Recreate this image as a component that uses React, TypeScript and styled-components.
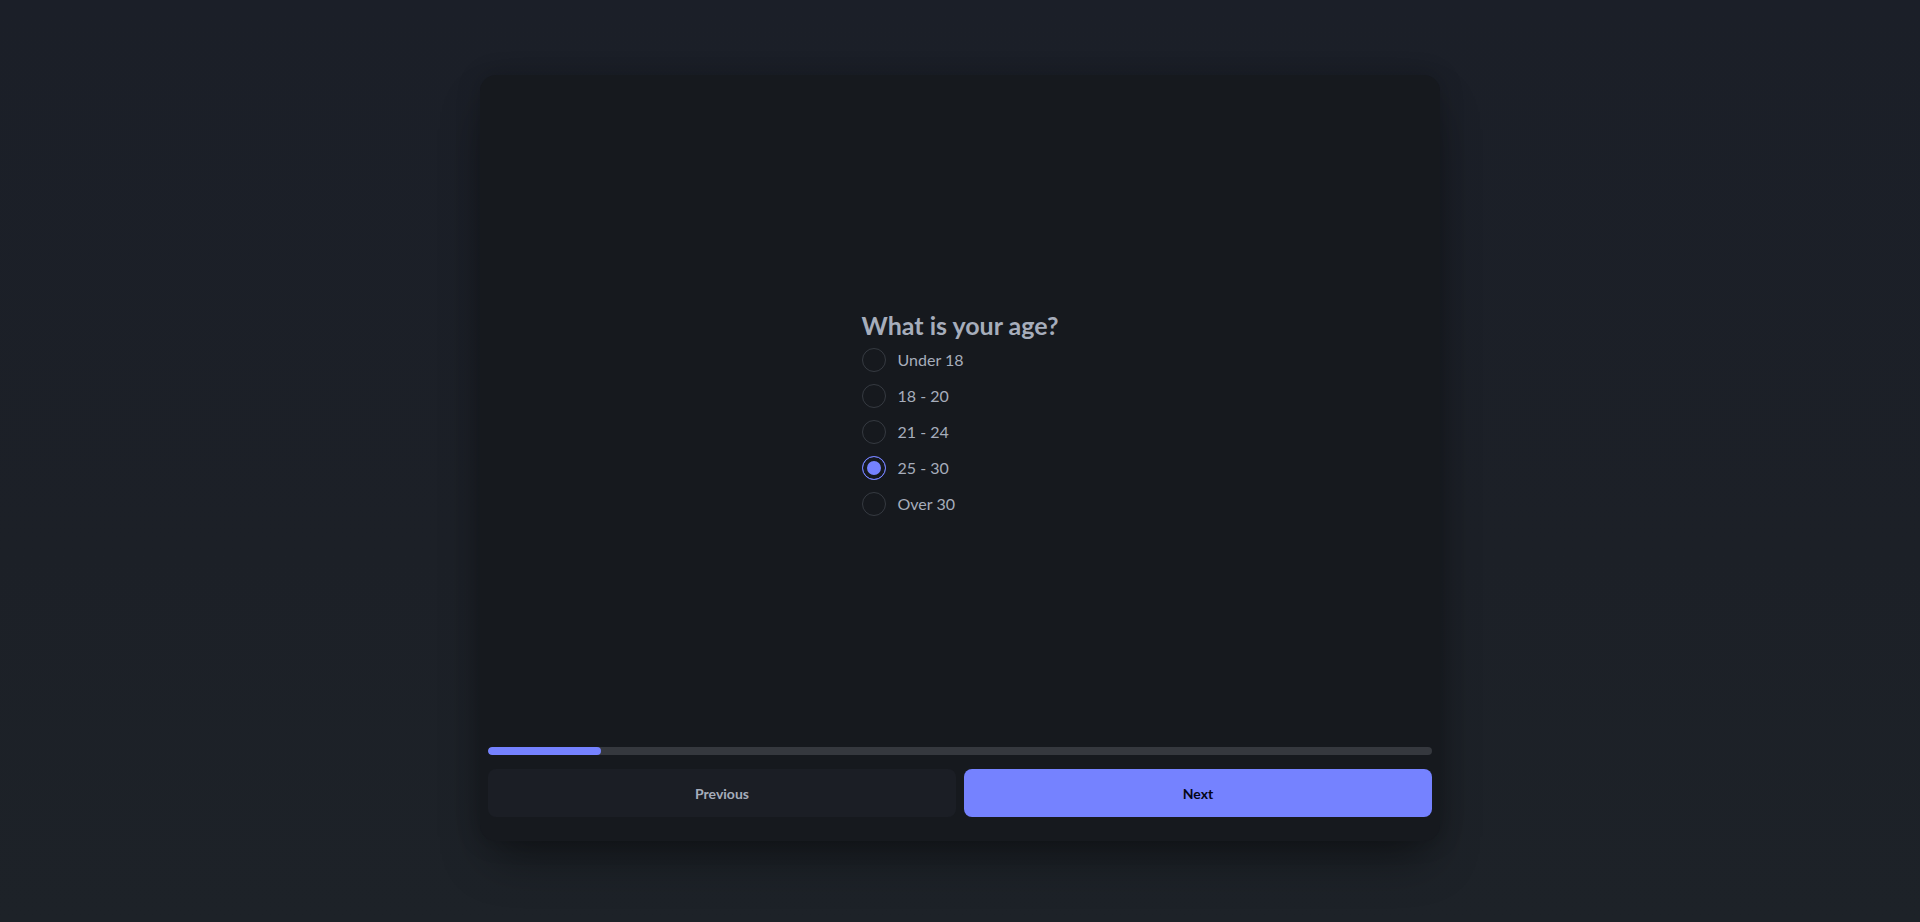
import styled, { createGlobalStyle } from "styled-components";
import { useState } from "react";

const GlobalStyle = createGlobalStyle`
    html, body {
        margin: 0;
        padding: 0;
        height: 100%;
    }
    body {
        background: linear-gradient(180deg, #1b1f28 0%, #1c2027 60%, #1d2228 100%);
        font-family: Lato, "Noto Sans", sans-serif;
        color: #a6adbb;
    }
    #root {
        min-height: 100%;
    }
`;

const Page = styled.main`
    height: 922px;
    display: flex;
    justify-content: center;
    padding-top: 75px;
    box-sizing: border-box;
`;

const Card = styled.section`
    width: 960px;
    height: 766px;
    box-sizing: border-box;
    padding: 0 8px 24px;
    background-color: #16191e;
    border-radius: 16px;
    box-shadow: 0 25px 50px -12px rgba(0, 0, 0, 0.45), 0 0 24px rgba(0, 0, 0, 0.18);
    display: flex;
    flex-direction: column;
`;

const Body = styled.div`
    flex: 1;
    display: flex;
    align-items: center;
    justify-content: center;
    padding-top: 8px;
`;

const Question = styled.fieldset`
    border: none;
    margin: 0;
    padding: 0;
    display: flex;
    flex-direction: column;
`;

const Title = styled.legend`
    padding: 0;
    margin-bottom: 1px;
    font-size: 25px;
    font-weight: 700;
    line-height: 32px;
    color: #a6adbb;
`;

const Option = styled.label`
    display: flex;
    align-items: center;
    gap: 12px;
    height: 36px;
    font-size: 16px;
    color: #a6adbb;
    cursor: pointer;
`;

const Radio = styled.input.attrs({ type: "radio" })`
    appearance: none;
    margin: 0;
    width: 24px;
    height: 24px;
    border-radius: 50%;
    border: 1.5px solid rgba(166, 173, 187, 0.22);
    box-sizing: border-box;
    background: transparent;
    cursor: pointer;

    &:checked {
        border-color: #7582ff;
        background-color: #7582ff;
        box-shadow: 0 0 0 4px #16191e inset;
    }
`;

const Progress = styled.div`
    height: 8px;
    border-radius: 4px;
    background-color: #35383e;
    overflow: hidden;
    margin-bottom: 14px;
`;

const Fill = styled.div`
    height: 100%;
    border-radius: 4px;
    background-color: #7582ff;
`;

const Actions = styled.div`
    display: grid;
    grid-template-columns: 1fr 1fr;
    gap: 8px;
`;

const Button = styled.button<{ $primary?: boolean }>`
    height: 48px;
    border: none;
    border-radius: 8px;
    font-family: inherit;
    font-size: 14px;
    font-weight: 700;
    cursor: pointer;
    background-color: ${p => (p.$primary ? "#7582ff" : "#1b1e25")};
    color: ${p => (p.$primary ? "#050617" : "#a6adbb")};
`;

const options = ["Under 18", "18 - 20", "21 - 24", "25 - 30", "Over 30"];

export default function App() {
    const [value, setValue] = useState("25 - 30");
    const progress = 12;

    return (
        <Page>
            <GlobalStyle />
            <Card>
                <Body>
                    <Question>
                        <Title>What is your age?</Title>
                        {options.map(o => (
                            <Option key={o}>
                                <Radio name="age" checked={value === o} onChange={() => setValue(o)} />
                                {o}
                            </Option>
                        ))}
                    </Question>
                </Body>
                <Progress>
                    <Fill style={{ width: `${progress}%` }} />
                </Progress>
                <Actions>
                    <Button>Previous</Button>
                    <Button $primary>Next</Button>
                </Actions>
            </Card>
        </Page>
    );
}
